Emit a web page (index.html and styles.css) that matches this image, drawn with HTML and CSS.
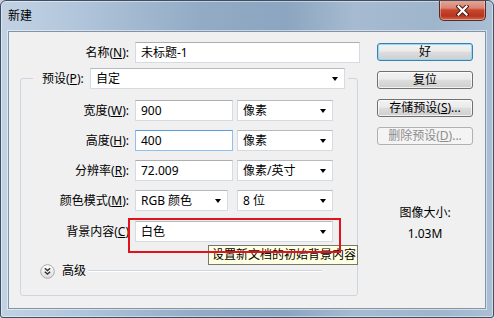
FILE: index.html
```html
<!DOCTYPE html>
<html lang="zh-CN">
<head>
    <meta charset="UTF-8">
    <title>新建</title>
    <link rel="stylesheet" href="styles.css">
</head>
<body>
    <div class="window">
        <div class="titlebar">
            <span class="title">新建</span>
            <button class="close" aria-label="关闭">
                <svg width="13" height="11" viewBox="0 0 13 11">
                    <path d="M2.5 1.5 L10.5 9.5 M10.5 1.5 L2.5 9.5" stroke="#4b1c15" stroke-width="4.2" stroke-linecap="square"/>
                    <path d="M2.5 1.5 L10.5 9.5 M10.5 1.5 L2.5 9.5" stroke="#fff" stroke-width="2.2" stroke-linecap="square"/>
                </svg>
            </button>
        </div>

        <div class="client">
            <div class="main">
                <div class="row name-row">
                    <span class="lbl">名称(<u>N</u>):</span>
                    <div class="field w-name">未标题-1</div>
                </div>

                <fieldset class="group">
                    <legend class="preset">
                        <span class="lbl-p">预设(<u>P</u>):</span>
                        <div class="combo w-preset">自定<span class="arrow"></span></div>
                    </legend>

                    <div class="row">
                        <span class="lbl">宽度(<u>W</u>):</span>
                        <div class="field w-num">900</div>
                        <div class="combo w-unit">像素<span class="arrow"></span></div>
                    </div>
                    <div class="row">
                        <span class="lbl">高度(<u>H</u>):</span>
                        <div class="field w-num focus">400</div>
                        <div class="combo w-unit">像素<span class="arrow"></span></div>
                    </div>
                    <div class="row">
                        <span class="lbl">分辨率(<u>R</u>):</span>
                        <div class="field w-num">72.009</div>
                        <div class="combo w-unit">像素/英寸<span class="arrow"></span></div>
                    </div>
                    <div class="row">
                        <span class="lbl">颜色模式(<u>M</u>):</span>
                        <div class="combo w-mode">RGB 颜色<span class="arrow"></span></div>
                        <div class="combo w-unit">8 位<span class="arrow"></span></div>
                    </div>
                    <div class="row bg-row">
                        <span class="lbl">背景内容(<u>C</u>)</span>
                        <div class="bg-wrap">
                            <div class="combo w-bg">白色<span class="arrow"></span></div>
                            <div class="marker"></div>
                            <div class="tooltip">设置新文档的初始背景内容</div>
                        </div>
                    </div>

                    <div class="advanced">
                        <svg class="adv-icon" width="15" height="15" viewBox="0 0 15 15">
                            <defs>
                                <linearGradient id="advBg" x1="0" y1="0" x2="0" y2="1">
                                    <stop offset="0" stop-color="#ffffff"/>
                                    <stop offset="1" stop-color="#dcdcdc"/>
                                </linearGradient>
                            </defs>
                            <circle cx="7.5" cy="7.5" r="6.8" fill="url(#advBg)" stroke="#a8a8a8"/>
                            <path d="M4.8 4.3 L7.5 6.6 L10.2 4.3 M4.8 7.8 L7.5 10.1 L10.2 7.8" fill="none" stroke="#333" stroke-width="1.4"/>
                        </svg>
                        <span class="adv-text">高级</span>
                        <span class="adv-line"></span>
                    </div>
                </fieldset>
            </div>

            <div class="side">
                <button class="btn default">好</button>
                <button class="btn">复位</button>
                <button class="btn">存储预设(<u>S</u>)...</button>
                <button class="btn" disabled>删除预设(<u>D</u>)...</button>
                <div class="info">
                    <div>图像大小:</div>
                    <div>1.03M</div>
                </div>
            </div>
        </div>
    </div>
</body>
</html>
```

FILE: styles.css
```css
* { box-sizing: border-box; }
body { margin: 0; background: #c9d3de; font: 12px/16px "Noto Sans", "Noto Sans CJK SC", sans-serif; color: #000; }
u { text-decoration: underline; text-underline-offset: 1px; }

/* window frame */
.window { width: 494px; height: 318px; display: flex; flex-direction: column; border: 1px solid #3e4e63; border-radius: 6px 6px 3px 3px; background: linear-gradient(90deg, #c2d2e3 0%, #b3c7dc 14%, #93abc5 40%, #8ca5c0 58%, #a6bbd1 72%, #9fb5cc 88%, #aabfd4 100%); box-shadow: inset 0 0 0 1px rgba(255,255,255,.45); overflow: hidden; }
.titlebar { height: 30px; flex: none; display: flex; justify-content: space-between; align-items: flex-start; padding-left: 7px; }
.title { margin-top: 7px; color: #000; }
.close { width: 47px; height: 21px; margin: -1px 7px 0 0; padding: 0; display: flex; align-items: center; justify-content: center; border: 1px solid #5a2a22; border-top: none; border-radius: 0 0 5px 5px; background: linear-gradient(#e9a999, #d98373 40%, #c6472f 50%, #b9341c 80%, #d36a50); box-shadow: inset 0 0 0 1px rgba(255,255,255,.35); }

/* client area */
.client { height: 278px; flex: none; margin: 0 7px; display: flex; gap: 17px; padding: 10px 12px 0 11px; background: #f0f0f0; border: 1px solid #8194aa; box-shadow: 0 0 0 1px rgba(255,255,255,.5); }
.main { width: 340px; flex: none; }
.side { width: 96px; flex: none; padding-top: 1px; }

/* rows */
.row { display: flex; align-items: center; height: 21px; margin-bottom: 9px; }
.lbl { width: 114px; padding-right: 6px; text-align: right; white-space: nowrap; }
.name-row { margin-bottom: 0; }
.name-row .lbl { width: 115px; }

.field { height: 21px; padding: 0 5px; line-height: 19px; background: #fff; border: 1px solid #d5dbe2; border-top-color: #abadb3; white-space: nowrap; }
.field.focus { border-color: #8fc0ee; border-top-color: #5a9fe0; }
.combo { height: 21px; display: flex; align-items: center; justify-content: space-between; padding: 0 6px 0 5px; line-height: 19px; background: #fff; border: 1px solid #d5dbe2; border-top-color: #b5b9c0; white-space: nowrap; }
.arrow { width: 0; height: 0; border-left: 3.5px solid transparent; border-right: 3.5px solid transparent; border-top: 4px solid #000; }

.w-name { width: 225px; }
.w-preset { width: 255px; }
.w-num { width: 98px; }
.w-unit { width: 96px; margin-left: 4px; }
.w-mode { width: 93px; }
.w-mode + .w-unit { margin-left: 9px; }
.w-bg { width: 198px; }

/* preset group */
.group { width: 338px; margin: 5px 0 0; padding: 11px 0 16px; border: 1px solid #cdd5de; border-radius: 3px; min-width: 0; }
.preset { margin-left: 12px; padding: 0 3px 0 9px; display: flex; align-items: center; height: 21px; }
.lbl-p { width: 48px; white-space: nowrap; }

.bg-row { margin-top: 10px; margin-bottom: 21px; }
.bg-wrap { position: relative; }
.marker { position: absolute; left: -7px; top: -3px; width: 213px; height: 35px; border: 2px solid #e0121c; z-index: 2; }
.tooltip { position: absolute; left: 73px; top: 24px; width: 150px; height: 20px; padding: 0 3px; line-height: 18px; background: #ffffe1; border: 1px solid #767676; white-space: nowrap; z-index: 1; }

.advanced { display: flex; align-items: center; height: 16px; padding-left: 19px; }
.adv-icon { flex: none; }
.adv-text { margin-left: 7px; }
.adv-line { width: 234px; margin-left: 2px; border-top: 1px solid #cdd5de; border-bottom: 1px solid #fff; }

/* buttons */
.btn { display: block; width: 96px; height: 18px; margin-bottom: 10px; padding: 0; font: inherit; line-height: 16px; color: #000; text-align: center; border: 1px solid #707070; border-radius: 3px; background: linear-gradient(#f2f2f2, #ebebeb 45%, #dddddd 50%, #cfcfcf); box-shadow: inset 0 0 0 1px rgba(255,255,255,.7); }
.btn.default { border-color: #3c7fb1; box-shadow: inset 0 0 0 1px #8fd8f8; }
.btn:disabled { color: #8d8d8d; border-color: #adb2b5; background: #f4f4f4; box-shadow: none; }

.info { margin-top: 57px; text-align: center; line-height: 21px; }
```
